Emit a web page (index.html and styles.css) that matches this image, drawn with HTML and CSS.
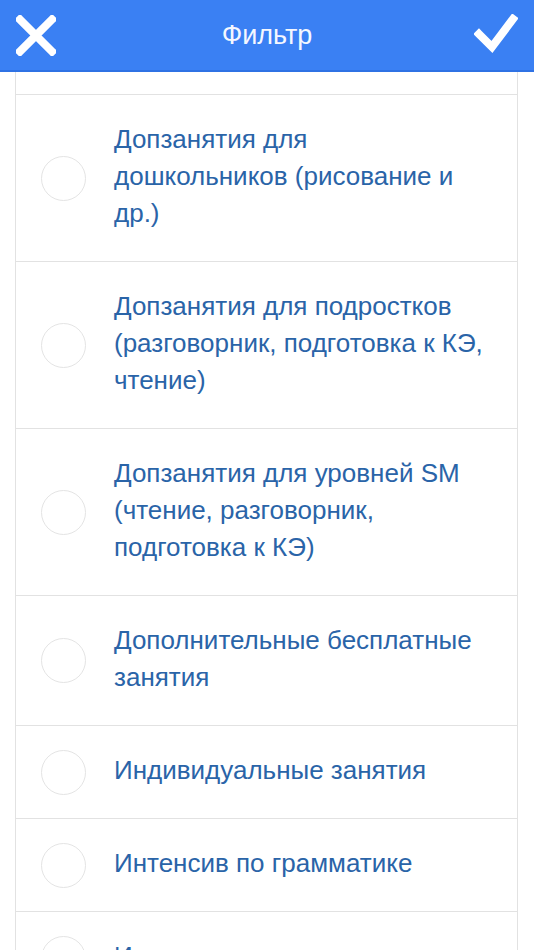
FILE: index.html
```html
<!DOCTYPE html>
<html lang="ru">
<head>
<meta charset="utf-8">
<title>Фильтр</title>
<link rel="stylesheet" href="styles.css">
</head>
<body>
<header class="topbar">
  <button class="icon-btn" aria-label="Закрыть">
    <svg width="40" height="41" viewBox="0 0 40 41"><path d="M4 4.5 L36 36.5 M36 4.5 L4 36.5" stroke="#fff" stroke-width="8" stroke-linecap="square" fill="none"/></svg>
  </button>
  <h1 class="title">Фильтр</h1>
  <button class="icon-btn" aria-label="Применить">
    <svg width="44" height="40" viewBox="0 0 44 40"><path d="M5 20 L18 33 L39 5" stroke="#fff" stroke-width="8" stroke-linecap="square" stroke-linejoin="miter" fill="none"/></svg>
  </button>
</header>
<ul class="list">
  <li class="row row-cut"></li>
  <li class="row"><span class="radio"></span><span class="label">Допзанятия для дошкольников (рисование и др.)</span></li>
  <li class="row"><span class="radio"></span><span class="label">Допзанятия для подростков (разговорник, подготовка к КЭ, чтение)</span></li>
  <li class="row"><span class="radio"></span><span class="label">Допзанятия для уровней SM (чтение, разговорник, подготовка к КЭ)</span></li>
  <li class="row"><span class="radio"></span><span class="label">Дополнительные бесплатные занятия</span></li>
  <li class="row"><span class="radio"></span><span class="label">Индивидуальные занятия</span></li>
  <li class="row"><span class="radio"></span><span class="label">Интенсив по грамматике</span></li>
  <li class="row"><span class="radio"></span><span class="label">Интенсив по лексике</span></li>
</ul>
</body>
</html>
```
FILE: styles.css
```css
html, body {
  margin: 0;
  padding: 0;
  background: #fff;
  overflow: hidden;
  height: 950px;
}
body {
  font-family: "Liberation Sans", Arial, sans-serif;
}
.topbar {
  height: 70px;
  background: #3a80f3;
  border-bottom: 2px solid #2f72e4;
  display: flex;
  align-items: center;
  justify-content: space-between;
  padding: 0 16px 0 16px;
}
.icon-btn {
  background: none;
  border: 0;
  padding: 0;
  margin: 0;
  display: flex;
  width: 44px;
  height: 41px;
  align-items: center;
}
.icon-btn:first-child { justify-content: flex-start; }
.icon-btn:last-child { justify-content: flex-end; margin-top: -3px; }
.title {
  margin: 0;
  font-weight: normal;
  font-size: 27px;
  color: #f4f7ff;
  flex: 1;
  text-align: center;
}
.list {
  list-style: none;
  margin: 0 16px 0 15px;
  padding: 0;
  border-left: 1px solid #e2e2e2;
  border-right: 1px solid #e2e2e2;
}
.row {
  display: flex;
  align-items: center;
  gap: 28px;
  padding: 0 20px 0 25px;
  border-bottom: 1px solid #e2e2e2;
}
.row-cut {
  height: 22px;
}
.radio {
  flex: none;
  width: 43px;
  height: 43px;
  border: 1.5px solid #e4e4e4;
  border-radius: 50%;
}
.label {
  padding: 26px 0 29px;
  max-width: 370px;
  font-size: 26px;
  line-height: 37px;
  color: #2a64a8;
}
```
